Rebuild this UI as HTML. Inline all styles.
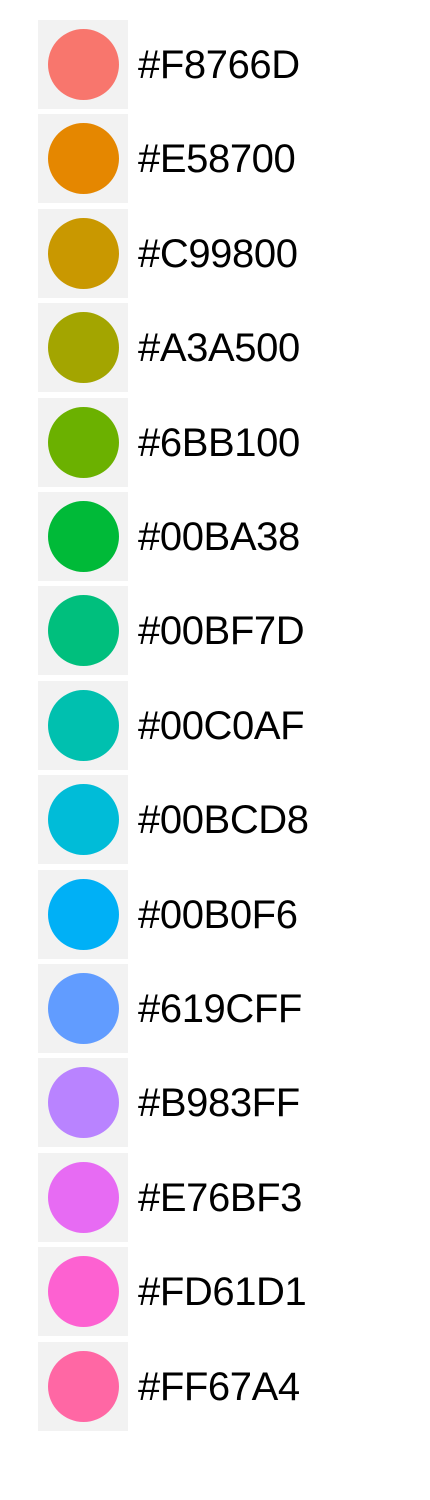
<!DOCTYPE html>
<html><head><style>
body{margin:0;width:430px;height:1500px;background:#fff;position:relative;overflow:hidden;font-family:"Liberation Sans",sans-serif}
.k{position:absolute;left:38px;width:90px;height:89px;background:#f2f2f2}
.k i{position:absolute;left:10px;top:9px;width:71px;height:71px;border-radius:50%}
.t{position:absolute;left:138px;font-size:40px;letter-spacing:-0.4px;line-height:89px;color:#000}
</style></head><body>
<script>
var c=["F8766D","E58700","C99800","A3A500","6BB100","00BA38","00BF7D","00C0AF","00BCD8","00B0F6","619CFF","B983FF","E76BF3","FD61D1","FF67A4"];
for(var i=0;i<15;i++){var y=20+i*94.4;document.write('<div class="k" style="top:'+y+'px"><i style="background:#'+c[i]+'"></i></div><div class="t" style="top:'+(y+1)+'px">#'+c[i]+'</div>');}
</script>
</body></html>
